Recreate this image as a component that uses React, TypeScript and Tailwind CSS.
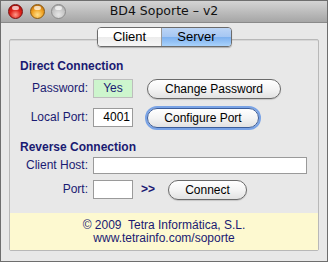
import React from 'react';

const navy = 'text-[#1a1a72]';

const Light: React.FC<{ kind: 'red' | 'orange' | 'gray' }> = ({ kind }) => {
  const bg =
    kind === 'red'
      ? 'bg-[radial-gradient(circle_at_50%_75%,#ff9a8a_0%,#e0231a_45%,#9a0a06_100%)] border-[#7a1010]'
      : kind === 'orange'
        ? 'bg-[radial-gradient(circle_at_50%_75%,#ffe08a_0%,#f0a020_50%,#a85a08_100%)] border-[#8a5a10]'
        : 'bg-[radial-gradient(circle_at_50%_75%,#e6e6e6_0%,#c4c4c4_55%,#9a9a9a_100%)] border-[#8c8c8c]';
  return (
    <div className={`relative w-[15px] h-[15px] rounded-full border ${bg}`}>
      <div className="absolute left-[3px] top-[1px] w-[7px] h-[4px] rounded-full bg-white/70" />
    </div>
  );
};

const PillButton: React.FC<{ label: string; focused?: boolean; width: string }> = ({ label, focused, width }) => (
  <button
    className={`${width} h-[20px] rounded-full border text-[12px] text-black leading-none bg-[linear-gradient(to_bottom,#ffffff_0%,#f4f4f4_50%,#e2e2e2_100%)] ${
      focused ? 'border-[#3b5d9a] ring-2 ring-[#79a3e6]' : 'border-[#6a6a6a] shadow-[0_1px_1px_rgba(0,0,0,0.15)]'
    }`}
  >
    {label}
  </button>
);

const Label: React.FC<{ children: React.ReactNode }> = ({ children }) => (
  <div className={`w-[68px] text-right text-[12px] ${navy}`}>{children}</div>
);

export default function App() {
  return (
    <div
      className="w-[328px] h-[262px] border border-[#6e6e6e] bg-[#e8e8e8] flex flex-col overflow-hidden"
      style={{ fontFamily: '"Liberation Sans", Arial, sans-serif' }}
    >
      {/* title bar */}
      <div className="h-[22px] shrink-0 grid grid-cols-[1fr_auto_1fr] items-center border-b border-[#8a8a8a] bg-[linear-gradient(to_bottom,#d4d4d4_0%,#bdbdbd_50%,#a6a6a6_100%)]">
        <div className="flex items-center gap-[6.5px] pl-[7px]">
          <Light kind="red" />
          <Light kind="orange" />
          <Light kind="gray" />
        </div>
        <div
          className="text-[12.5px] text-[#111]"
          style={{ fontFamily: '"DejaVu Sans", sans-serif' }}
        >
          BD4 Soporte – v2
        </div>
        <div />
      </div>

      {/* tabs */}
      <div className="flex justify-center pt-[4px] pl-[1px] relative z-10">
        <div className="flex h-[20px] rounded-[4px] border border-[#6b6b6b] overflow-hidden shadow-[0_1px_1px_rgba(0,0,0,0.25)] text-[13px]">
          <div className="w-[64px] flex items-center justify-center text-black bg-[linear-gradient(to_bottom,#ffffff_0%,#ffffff_50%,#ececec_51%,#f6f6f6_100%)] border-r border-[#9a9a9a]">
            Client
          </div>
          <div className="w-[69px] flex items-center justify-center text-black bg-[linear-gradient(to_bottom,#bcd5f6_0%,#a6c7f3_48%,#7eb1ef_52%,#a9d2fb_100%)]">
            Server
          </div>
        </div>
      </div>

      {/* group box */}
      <div className="mx-[8px] -mt-[8px] h-[212px] border border-[#b8b8b8] rounded-[2px] shadow-[inset_0_1px_0_#d6d6d6] flex flex-col">
        <div className="pl-[10px] pr-[10px] pt-[19px]">
          <div className={`text-[12px] font-bold leading-[14px] ${navy}`}>Direct Connection</div>

          <div className="flex items-center gap-[5px] mt-[5px] h-[20px]">
            <Label>Password:</Label>
            <div className={`w-[40px] h-[19px] border border-[#bdbdbd] bg-[#cdf5cd] text-[12px] ${navy} flex items-center justify-center`}>
              Yes
            </div>
            <div className="ml-[9px]">
              <PillButton label="Change Password" width="w-[134px]" />
            </div>
          </div>

          <div className="flex items-center gap-[5px] mt-[9px] h-[20px]">
            <Label>Local Port:</Label>
            <div className="w-[40px] h-[19px] border border-[#9a9a9a] bg-white text-[12px] text-black flex items-center justify-end pr-[2px]">
              4001
            </div>
            <div className="ml-[9px]">
              <PillButton label="Configure Port" focused width="w-[112px]" />
            </div>
          </div>

          <div className={`text-[12px] font-bold leading-[14px] mt-[13px] ${navy}`}>Reverse Connection</div>

          <div className="flex items-center gap-[5px] mt-[2px] h-[18px]">
            <Label>Client Host:</Label>
            <div className="w-[214px] h-[17px] border border-[#9a9a9a] bg-white" />
          </div>

          <div className="flex items-center gap-[5px] mt-[5px] h-[20px]">
            <Label>Port:</Label>
            <div className="w-[40px] h-[19px] border border-[#9a9a9a] bg-white" />
            <div className={`ml-[3px] text-[12px] font-bold ${navy}`}>&gt;&gt;</div>
            <div className="ml-[8px]">
              <PillButton label="Connect" width="w-[79px]" />
            </div>
          </div>
        </div>

        <div className={`mt-auto h-[37px] bg-[#fdf9d0] flex flex-col items-center justify-center text-[12px] leading-[13px] ${navy}`}>
          <div className="whitespace-pre">© 2009  Tetra Informática, S.L.</div>
          <div>www.tetrainfo.com/soporte</div>
        </div>
      </div>
    </div>
  );
}
